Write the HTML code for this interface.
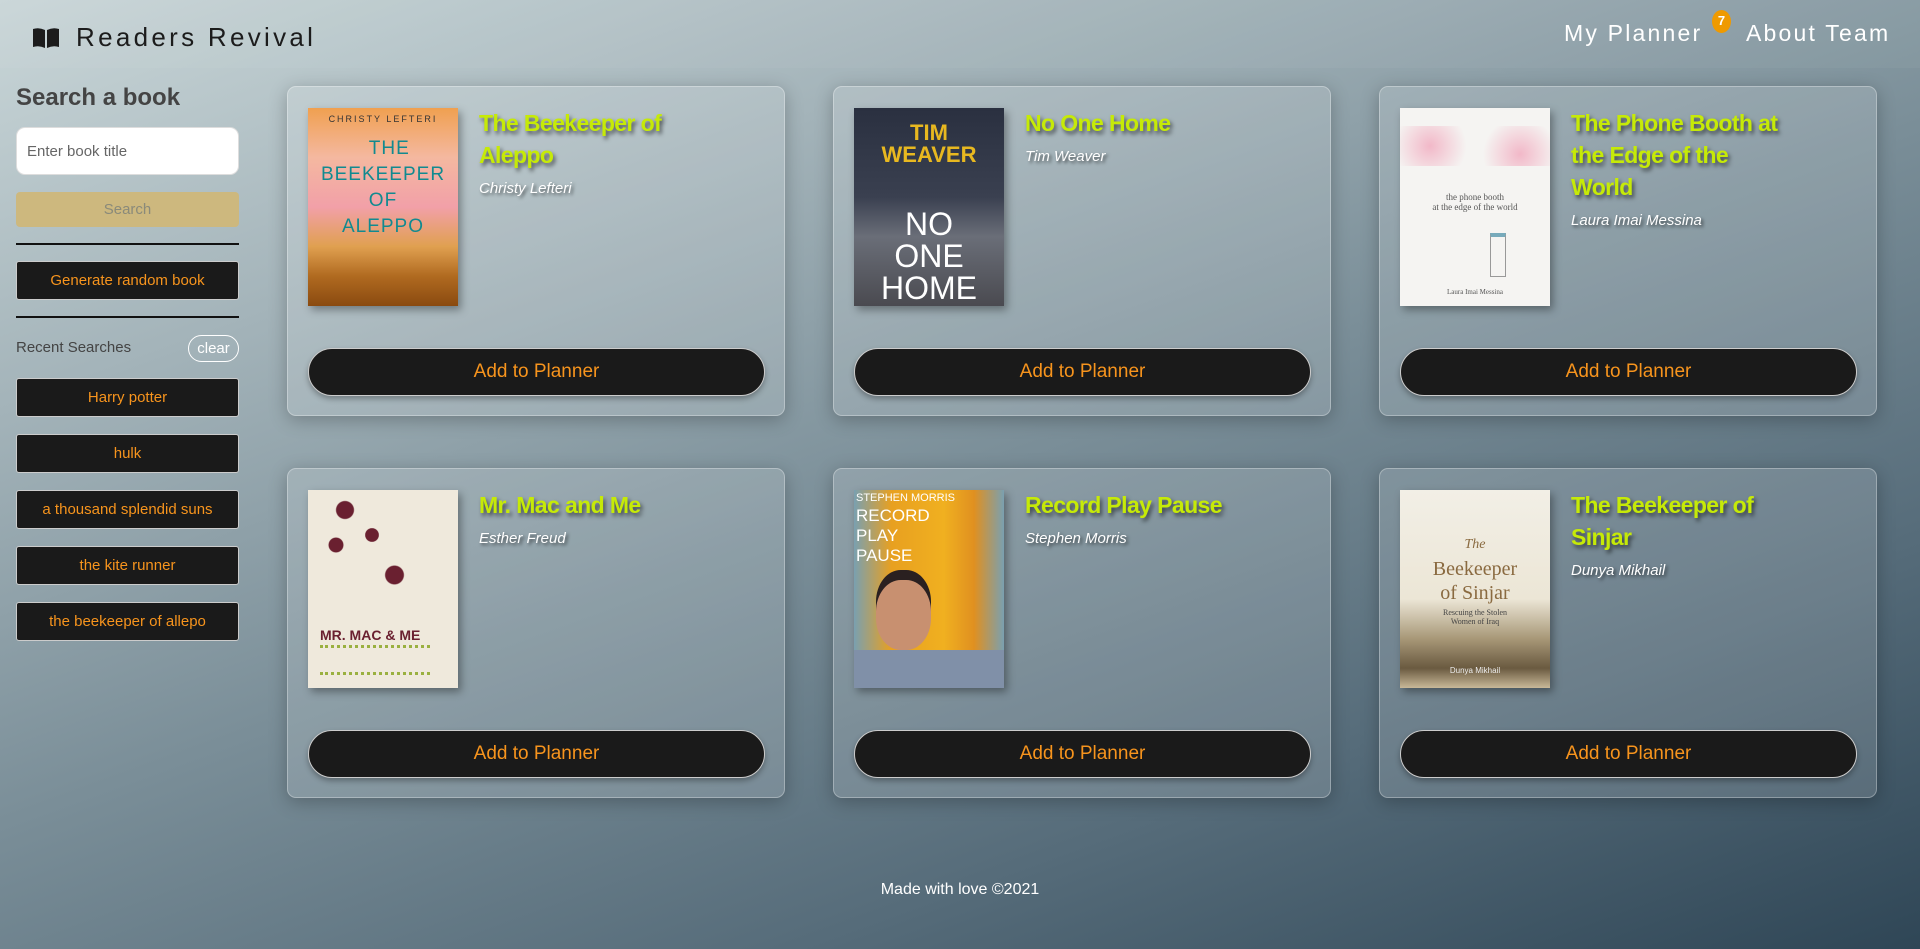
<!DOCTYPE html>
<html><head><meta charset="utf-8">
<style>
*{box-sizing:border-box;margin:0;padding:0}
html,body{width:1920px;height:949px;overflow:hidden}
body{font-family:"Liberation Sans",sans-serif;background:linear-gradient(160deg,#c9d6d8 0%,#a3b3b9 25%,#7a8e98 50%,#566c7a 75%,#2f4656 100%);position:relative}
.hdr{position:absolute;left:0;top:0;width:1920px;height:68px;background:rgba(255,255,255,0.04)}
.logo{position:absolute;left:32px;top:22px;display:flex;align-items:center;color:#1c1c1c;font-size:26px;letter-spacing:3.3px}
.logo svg{margin-right:16px}
.nav{position:absolute;top:20px;color:#fff;font-size:23px;letter-spacing:2.2px}
.badge{position:absolute;left:1712px;top:10px;width:19px;height:23px;border-radius:50%;background:#ef9a00;color:#fff;font-size:13px;font-weight:bold;text-align:center;line-height:22px}
.side{position:absolute;left:16px;top:80px;width:223px}
.side h2{font-size:24px;color:#444;font-weight:bold;margin-top:4px;height:30px}
.inp{position:absolute;top:47px;left:0;width:223px;height:48px;background:#fff;border-radius:9px;border:1px solid #ddd;color:#666;font-size:15px;padding:15px 10px}
.srch{position:absolute;top:112px;left:0;width:223px;height:35px;background:#cdb87e;border-radius:4px;color:#8a8a7a;font-size:15px;text-align:center;line-height:35px}
.hr{position:absolute;left:0;width:223px;height:2px;background:#111}
.blk{position:absolute;left:0;width:223px;background:#1a1a1a;border:1px solid #ccc;border-radius:3px;color:#f7941d;font-size:15px;text-align:center}
.rs{position:absolute;top:259px;left:0;color:#444;font-size:15px}
.clr{position:absolute;top:255px;left:172px;width:51px;height:27px;border:1.5px solid #fff;border-radius:14px;color:#fff;font-size:15px;text-align:center;line-height:24px;padding-top:1px}
.card{position:absolute;width:498px;height:330px;background:rgba(255,255,255,0.14);border:1px solid rgba(255,255,255,0.3);border-radius:9px;box-shadow:0 4px 18px rgba(0,0,0,0.25)}
.cov{position:absolute;left:20px;top:21px;width:150px;height:198px;overflow:hidden;box-shadow:3px 4px 8px rgba(0,0,0,0.35)}
.t{position:absolute;left:191px;top:20px;width:212px;color:#c6ea07;font-size:23px;font-weight:bold;line-height:32px;letter-spacing:-0.6px;text-shadow:2px 3px 4px rgba(0,0,0,0.6)}
.a{color:#fff;font-size:15px;font-style:italic;font-weight:normal;line-height:20px;margin-top:8px;letter-spacing:0;text-shadow:2px 2px 3px rgba(0,0,0,0.6);white-space:nowrap}
.btn{position:absolute;left:20px;top:261px;width:457px;height:48px;border-radius:24px;background:#1a1a1a;border:1px solid #ccc;color:#f7941d;font-size:19px;text-align:center;line-height:46px;box-shadow:0 3px 6px rgba(0,0,0,0.3)}
.ct{position:absolute;width:100%;text-align:center}
.foot{position:absolute;left:0;width:1920px;top:881px;text-align:center;color:#fff;font-size:16px}
</style></head><body>
<div class="hdr"></div>
<div class="logo"><svg width="28" height="22" viewBox="0 0 28 22"><path d="M1 2 Q7 0 13 3 V21 Q7 18 1 20Z M15 3 Q21 0 27 2 V20 Q21 18 15 21Z" fill="#1c1c1c"/></svg>Readers Revival</div>
<div class="nav" style="left:1564px">My Planner</div>
<div class="badge">7</div>
<div class="nav" style="left:1746px">About Team</div>

<div class="side">
<h2>Search a book</h2>
<div class="inp">Enter book title</div>
<div class="srch">Search</div>
<div class="hr" style="top:163px"></div>
<div class="blk" style="top:181px;height:39px;line-height:37px">Generate random book</div>
<div class="hr" style="top:236px"></div>
<div class="rs">Recent Searches</div>
<div class="clr">clear</div>
<div class="blk" style="top:298px;height:39px;line-height:37px">Harry potter</div>
<div class="blk" style="top:354px;height:39px;line-height:37px">hulk</div>
<div class="blk" style="top:410px;height:39px;line-height:37px">a thousand splendid suns</div>
<div class="blk" style="top:466px;height:39px;line-height:37px">the kite runner</div>
<div class="blk" style="top:522px;height:39px;line-height:37px">the beekeeper of allepo</div>
</div>

<div class="card" style="left:287px;top:86px">
<div class="cov" style="background:linear-gradient(180deg,#f0a050 0%,#f4b8a0 25%,#f2a0a8 50%,#e0a050 70%,#b06a20 85%,#8a4a10 100%)">
<div class="ct" style="top:6px;font-size:9px;letter-spacing:2px;color:#333">CHRISTY LEFTERI</div>
<div class="ct" style="top:28px;font-size:19px;line-height:26px;color:#118a90;letter-spacing:1px">&nbsp;&nbsp;THE<br>BEEKEEPER<br>OF<br>ALEPPO</div></div>
<div class="t">The Beekeeper of Aleppo<div class="a">Christy Lefteri</div></div>
<div class="btn">Add to Planner</div></div>

<div class="card" style="left:833px;top:86px">
<div class="cov" style="background:linear-gradient(180deg,#2a3040 0%,#3a4050 45%,#6a6e78 65%,#4a4a50 100%)">
<div class="ct" style="top:14px;font-size:22px;line-height:22px;color:#e8b820;font-weight:bold">TIM<br>WEAVER</div>
<div class="ct" style="top:100px;font-size:32px;line-height:32px;color:#fff">NO<br>ONE<br>HOME</div></div>
<div class="t">No One Home<div class="a">Tim Weaver</div></div>
<div class="btn">Add to Planner</div></div>

<div class="card" style="left:1379px;top:86px">
<div class="cov" style="background:#f5f4f2">
<div class="ct" style="top:18px;height:40px;background:radial-gradient(circle at 20% 50%,#f2b8c8 0,transparent 30%),radial-gradient(circle at 80% 70%,#f2b8c8 0,transparent 30%)"></div>
<div class="ct" style="top:84px;font-size:9px;color:#555;font-family:'Liberation Serif',serif">the phone booth<br>at the edge of the world</div>
<div style="position:absolute;left:90px;top:125px;width:16px;height:44px;border:1px solid #999;border-top:4px solid #7ab"></div>
<div class="ct" style="top:180px;font-size:7px;color:#555;font-family:'Liberation Serif',serif">Laura Imai Messina</div></div>
<div class="t">The Phone Booth at the Edge of the World<div class="a">Laura Imai Messina</div></div>
<div class="btn">Add to Planner</div></div>

<div class="card" style="left:287px;top:468px">
<div class="cov" style="background:#efe9dc">
<div style="position:absolute;left:10px;top:5px;width:90px;height:100px;background:radial-gradient(circle at 30% 15%,#6a2030 0,#6a2030 8%,transparent 9%),radial-gradient(circle at 60% 40%,#6a2030 0,#6a2030 8%,transparent 9%),radial-gradient(circle at 20% 50%,#6a2030 0,#6a2030 8%,transparent 9%),radial-gradient(circle at 85% 80%,#6a2030 0,#6a2030 8%,transparent 9%)"></div>
<div style="position:absolute;left:12px;top:137px;font-size:14px;color:#6a2030;font-weight:bold">MR. MAC &amp; ME</div>
<div style="position:absolute;left:12px;top:155px;width:110px;height:30px;border-top:3px dotted #9ab040;border-bottom:3px dotted #9ab040"></div></div>
<div class="t">Mr. Mac and Me<div class="a">Esther Freud</div></div>
<div class="btn">Add to Planner</div></div>

<div class="card" style="left:833px;top:468px">
<div class="cov" style="background:linear-gradient(90deg,#7aa0b0 0%,#e8a020 25%,#f0b020 60%,#e09020 80%,#7aa0b0 100%)">
<div style="position:absolute;left:2px;top:2px;font-size:11px;color:#fff">STEPHEN MORRIS</div>
<div style="position:absolute;left:2px;top:16px;font-size:17px;line-height:20px;color:#fff">RECORD<br>PLAY<br>PAUSE</div>
<div style="position:absolute;left:22px;top:90px;width:55px;height:70px;border-radius:45%;background:#c89070;box-shadow:0 -10px 0 #2a2020"></div>
<div style="position:absolute;left:0;top:160px;width:150px;height:40px;background:#8090a8"></div></div>
<div class="t">Record Play Pause<div class="a">Stephen Morris</div></div>
<div class="btn">Add to Planner</div></div>

<div class="card" style="left:1379px;top:468px">
<div class="cov" style="background:linear-gradient(180deg,#f2efe6 0%,#ece6d6 55%,#a89878 75%,#6a5a40 90%,#c8b898 100%)">
<div class="ct" style="top:40px;font-size:20px;line-height:24px;color:#8a6a40;font-family:'Liberation Serif',serif"><i style="font-size:14px">The</i><br>Beekeeper<br>of Sinjar</div>
<div class="ct" style="top:118px;font-size:8px;color:#444;font-family:'Liberation Serif',serif">Rescuing the Stolen<br>Women of Iraq</div>
<div class="ct" style="top:176px;font-size:8px;color:#eee">Dunya Mikhail</div></div>
<div class="t">The Beekeeper of Sinjar<div class="a">Dunya Mikhail</div></div>
<div class="btn">Add to Planner</div></div>

<div class="foot">Made with love ©2021</div>
</body></html>
